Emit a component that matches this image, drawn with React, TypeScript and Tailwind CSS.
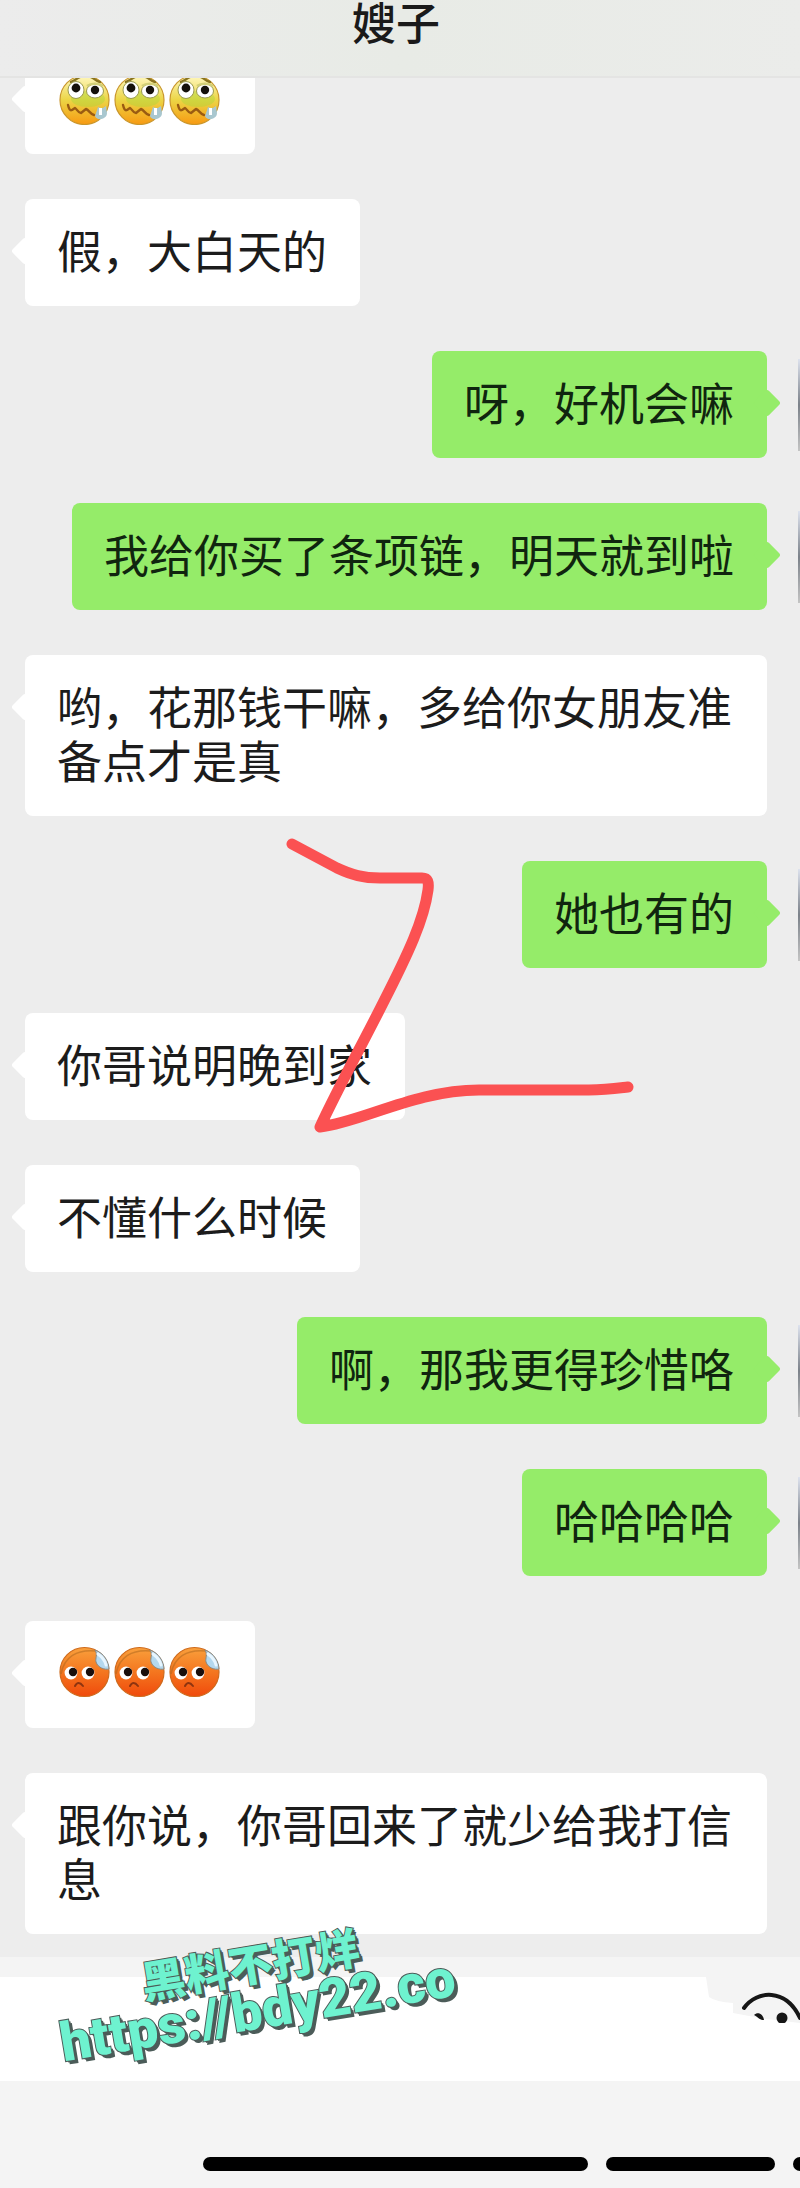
import React, { useState } from 'react';

type Message = {
  id: number;
  from: 'her' | 'me';
  text?: string;
  sticker?: 'sick' | 'sad';
};

const messages: Message[] = [
  { id: 1, from: 'her', sticker: 'sick' },
  { id: 2, from: 'her', text: '假，大白天的' },
  { id: 3, from: 'me', text: '呀，好机会嘛' },
  { id: 4, from: 'me', text: '我给你买了条项链，明天就到啦' },
  { id: 5, from: 'her', text: '哟，花那钱干嘛，多给你女朋友准备点才是真' },
  { id: 6, from: 'me', text: '她也有的' },
  { id: 7, from: 'her', text: '你哥说明晚到家' },
  { id: 8, from: 'her', text: '不懂什么时候' },
  { id: 9, from: 'me', text: '啊，那我更得珍惜咯' },
  { id: 10, from: 'me', text: '哈哈哈哈' },
  { id: 11, from: 'her', sticker: 'sad' },
  { id: 12, from: 'her', text: '跟你说，你哥回来了就少给我打信息' }
];

function SickFace() {
  return (
    <svg viewBox="0 0 55 54" className="w-[55px] h-[54px]" aria-hidden="true">
      <circle cx="27.5" cy="29" r="24.5" fill="url(#sick)" stroke="#c9962c" strokeWidth="1.2" />
      <ellipse cx="31" cy="28" rx="17" ry="8" fill="#a5d63a" opacity="0.4" />
      <path d="M14 11c3-1 5-3 9-5M34 6c3 1 4 4 9 5" fill="none" stroke="#8a7420" strokeWidth="2.4" strokeLinecap="round" />
      <ellipse cx="19" cy="19" rx="8" ry="8.5" fill="#fff" stroke="#9a9a50" strokeWidth="1" />
      <ellipse cx="38" cy="20" rx="8.5" ry="7" fill="#fff" stroke="#9a9a50" strokeWidth="1" />
      <path d="M30 15c4-3 12-3 16 0" fill="none" stroke="#d2cf78" strokeWidth="2.5" />
      <circle cx="19" cy="17" r="4.4" fill="#15110c" />
      <circle cx="38" cy="19" r="4.2" fill="#15110c" />
      <path d="M11 34c1 4 2 6 4 5l3-2c2 1 3 5 6 5l5-4c3 1 4 5 8 6" fill="none" stroke="#9a5b12" strokeWidth="2.4" strokeLinecap="round" strokeLinejoin="round" />
      <path d="M41 36c3 2 6 1 8-1l1 7c0 7-11 8-12 3z" fill="#a9c7cf" />
      <path d="M42 37h3v7h-3z" fill="#fff" />
    </svg>
  );
}

function SadFace() {
  return (
    <svg viewBox="0 0 55 54" className="w-[55px] h-[54px]" aria-hidden="true">
      <circle cx="27.5" cy="27" r="24.5" fill="url(#sad)" stroke="#cf6a1c" strokeWidth="1.2" />
      <path d="M4 29C7 12 20 4 39 6" fill="none" stroke="#a9641c" strokeWidth="1.5" opacity="0.5" />
      <path d="M38 5c9 3 14 12 14 19-4 1-11-1-13-7-1-4 2-7-1-12z" fill="#b4d8ee" stroke="#8b8880" strokeWidth="1" />
      <path d="M41 9c4 3 7 6 8 11" fill="none" stroke="#e8f6ff" strokeWidth="3" strokeLinecap="round" />
      <circle cx="14" cy="28" r="6.4" fill="#fff" />
      <circle cx="31" cy="28" r="6.4" fill="#fff" />
      <circle cx="16" cy="27" r="4.2" fill="#1a0f0c" />
      <circle cx="33" cy="27" r="4.2" fill="#1a0f0c" />
      <path d="M18 41c2-4 5-4 8 0" fill="none" stroke="#8e3410" strokeWidth="2" strokeLinecap="round" />
    </svg>
  );
}

function Bubble({ message }: { message: Message }) {
  const mine = message.from === 'me';
  const Face = message.sticker === 'sick' ? SickFace : SadFace;

  return (
    <li className={mine ? 'relative flex justify-end pl-[25px] pr-[33px]' : 'relative flex pl-[25px] pr-[33px]'}>
      <div className={`relative rounded-lg pt-6 pb-[29px] pl-8 pr-[33px] ${mine ? 'bg-[#95ec69] text-[#10250f]' : 'bg-white text-[#1c1c1c]'}`}>
        <span className={`absolute top-[42px] size-5 rotate-45 rounded-[3px] ${mine ? '-right-[10px] bg-[#95ec69]' : '-left-[10px] bg-white'}`}></span>
        {message.sticker ? (
          <div className="relative flex h-[54px] items-end">
            <Face />
            <Face />
            <Face />
          </div>
        ) : (
          <p className="relative text-[45px] leading-[54px] break-all">{message.text}</p>
        )}
      </div>
      {mine && <div className="absolute top-2 right-0 h-[92px] w-[2px] bg-gradient-to-b from-[#dde2ee] via-[#7c828a] to-[#c4c4c4]"></div>}
    </li>
  );
}

export default function App() {
  const [draft, setDraft] = useState('');

  return (
    <div className="relative overflow-hidden bg-[#ededed] font-['Noto_Sans_CJK_SC',sans-serif]">
      <svg width="0" height="0" className="absolute" aria-hidden="true">
        <defs>
          <linearGradient id="sick" x1="0" y1="0" x2="0" y2="1">
            <stop offset="0" stopColor="#fff8c0" />
            <stop offset="0.5" stopColor="#ecd545" />
            <stop offset="1" stopColor="#f79a12" />
          </linearGradient>
          <linearGradient id="sad" x1="0" y1="0" x2="0" y2="1">
            <stop offset="0" stopColor="#f9a03c" />
            <stop offset="0.5" stopColor="#f4761f" />
            <stop offset="1" stopColor="#f04a0c" />
          </linearGradient>
        </defs>
      </svg>

      <header className="relative z-10 h-[78px] border-b-2 border-[#e4e4e3] bg-gradient-to-r from-[#ececec] via-[#e8ebe6] to-[#ebecea] pr-2">
        <h1 className="text-center text-[44px] leading-[42px] font-medium text-[#1a1a1a]">嫂子</h1>
      </header>

      <main className="relative -mt-[31px] pb-[23px]">
        <ul className="flex flex-col gap-[45px]">
          {messages.map((message) => (
            <Bubble key={message.id} message={message} />
          ))}
        </ul>
        {/* red marker stroke */}
        <svg viewBox="0 0 350 300" className="absolute top-[788px] left-[286px] w-[350px] h-[300px]" fill="none" stroke="#fb5152" strokeWidth="11" strokeLinecap="round" strokeLinejoin="round" aria-hidden="true">
          <path d="M6 9L51 33C66 40 77 43 94 43H136C142 43 143 47 142 55C138 85 122 119 97 168C77 208 52 253 34 292C76 287 130 255 193 255H303C320 255 326 254 342 252" />
        </svg>
      </main>

      <footer className="relative bg-[#f4f4f4] pt-5 pb-[18px]">
        <div className="relative">
          <input
            type="text"
            aria-label="消息"
            value={draft}
            onChange={(e) => setDraft(e.target.value)}
            className="block h-[104px] w-full bg-white px-8 text-[45px] outline-none"
          />
          <button type="button" aria-label="表情" className="absolute top-0 right-0 h-[46px] w-[94px]">
            <svg viewBox="0 0 94 46" className="w-full h-full" aria-hidden="true">
              <path d="M0 0H94V46L60 42L27 36V26Q10 25 3 20Z" fill="#f4f4f4" />
              <path d="M38 31C51 13 80 11 94 41" fill="none" stroke="#161616" strokeWidth="4" strokeLinecap="round" />
              <circle cx="76" cy="41" r="5.5" fill="#161616" />
              <path d="M48 38c4-4 9-1 10 5-4 0-5-2-10-5z" fill="#161616" />
            </svg>
          </button>
        </div>
        <div className="mt-[76px] flex gap-[18px] pl-[203px]">
          <div className="h-[14px] grow-[386] basis-0 rounded-full bg-black"></div>
          <div className="h-[14px] grow-[169] basis-0 rounded-full bg-black"></div>
          <div className="h-[14px] w-[7px] rounded-l-full bg-black"></div>
        </div>
      </footer>

      <div className="absolute bottom-[152px] left-[53px] z-20 flex w-[402px] -rotate-[9.5deg] flex-col items-center whitespace-nowrap font-black text-[#6ef2cf] [paint-order:stroke] [-webkit-text-stroke:2px_#4c5c59] [text-shadow:2px_2px_0_#4c5c59,3px_4px_0_#4c5c59]">
        <span className="text-[44px] leading-[46px]">黑料不打烊</span>
        <span className="font-['Roboto',sans-serif] text-[54px] leading-[52px]">https://bdy22.co</span>
      </div>
    </div>
  );
}
